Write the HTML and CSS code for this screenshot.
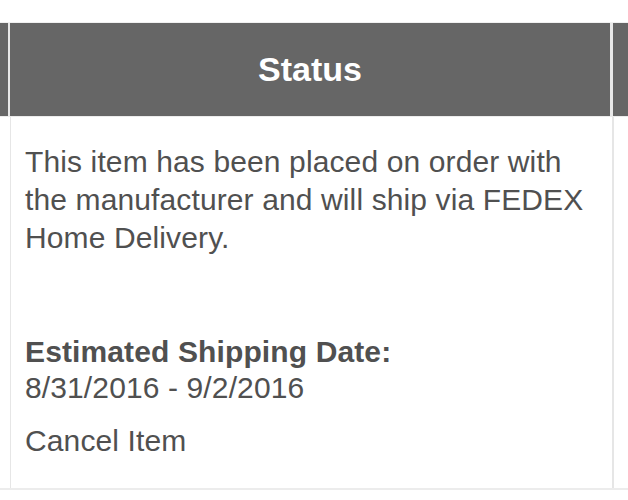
FILE: index.html
```html
<!DOCTYPE html>
<html lang="en">
<head>
  <meta charset="UTF-8" />
  <meta name="viewport" content="width=device-width, initial-scale=1" />
  <title>Order Status</title>
  <link rel="stylesheet" href="styles.css">
</head>
<body>

  <div class="top-strip"></div>

  <div class="row head">
    <div class="cell edge-left"></div>
    <div class="cell main"><h2>Status</h2></div>
    <div class="cell edge-right"></div>
  </div>

  <div class="row body-row">
    <div class="cell edge-left"></div>
    <div class="cell main">
      <p class="status-text">This item has been placed on order with the manufacturer and will ship via FEDEX Home Delivery.</p>
      <p class="ship-label">Estimated Shipping Date:</p>
      <p class="ship-date">8/31/2016 - 9/2/2016</p>
      <p class="cancel">Cancel Item</p>
    </div>
    <div class="cell edge-right"></div>
  </div>

</body>
</html>
```

FILE: styles.css
```css
body {
  margin: 0;
  font-family: 'Liberation Sans', Arial, sans-serif;
  background-color: #fff;
  color: #505050;
}

.top-strip {
  height: 22px;
  border-bottom: 1px solid #f0f0f0;
}

.row {
  display: flex;
}

.head {
  background-color: #e8e8e8;
  column-gap: 2px;
  height: 93px;
  border-bottom: 1px solid #ececec;
}

.head .cell {
  background-color: #666;
}

.head .edge-left {
  width: 8px;
}

.head .main {
  width: 600px;
  display: flex;
  align-items: center;
  justify-content: center;
}

.head .edge-right {
  flex: 1;
  margin-left: 1px;
}

h2 {
  margin: 0;
  color: #fff;
  font-size: 34px;
  font-weight: bold;
}

.body-row {
  height: 371px;
  border-bottom: 2px solid #ececec;
}

.body-row .edge-left {
  width: 10px;
  border-right: 1px solid #e6e6e6;
}

.body-row .main {
  width: 568px;
  padding: 26px 19px 0 14px;
  border-right: 2px solid #e6e6e6;
}

.body-row .edge-right {
  flex: 1;
}

.body-row p {
  margin: 0;
  font-size: 30px;
  letter-spacing: 0.12px;
}

.status-text {
  line-height: 38px;
}

.ship-label {
  font-weight: bold;
  margin-top: 77px !important;
  line-height: 36px;
}

.ship-date {
  line-height: 36px;
}

.cancel {
  margin-top: 17px !important;
  line-height: 36px;
}
```
